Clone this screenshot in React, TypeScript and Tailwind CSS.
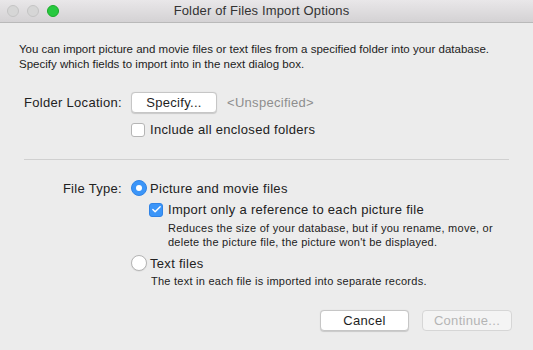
import { Check } from 'lucide-react';

function Light({ color }: { color: 'gray' | 'green' }) {
  return (
    <span
      className={`block w-[12px] h-[12px] rounded-full border ${
        color === 'green'
          ? 'bg-[#27c93f] border-[#1aab29]'
          : 'bg-[#d6d6d6] border-[#c4c4c4]'
      }`}
    />
  );
}

function Radio({ checked }: { checked?: boolean }) {
  return checked ? (
    <span className="flex items-center justify-center w-[16px] h-[16px] rounded-full bg-[#3b95f8] border border-[#2f83e6]">
      <span className="block w-[6px] h-[6px] rounded-full bg-white" />
    </span>
  ) : (
    <span className="block w-[16px] h-[16px] rounded-full bg-white border border-[#b5b5b5] shadow-[0_0.5px_1px_rgba(0,0,0,0.1)]" />
  );
}

function CheckBox({ checked }: { checked?: boolean }) {
  return checked ? (
    <span className="flex items-center justify-center w-[14px] h-[14px] rounded-[3px] bg-[#3b95f8] border border-[#2f83e6]">
      <Check className="w-[11px] h-[11px] text-white" strokeWidth={3} />
    </span>
  ) : (
    <span className="block w-[14px] h-[14px] rounded-[3px] bg-white border border-[#b5b5b5]" />
  );
}

function Button({
  children,
  disabled,
  className = '',
}: {
  children: React.ReactNode;
  disabled?: boolean;
  className?: string;
}) {
  return (
    <button
      type="button"
      className={`h-[21px] rounded-[4px] border text-[13px] tracking-[0.3px] leading-none ${
        disabled
          ? 'border-[#d6d6d6] text-[#b4b4b4] bg-[#f4f4f4]'
          : 'border-[#c6c6c6] text-[#1e1e1e] bg-white shadow-[0_0.5px_1px_rgba(0,0,0,0.15)]'
      } ${className}`}
    >
      {children}
    </button>
  );
}

export default function App() {
  return (
    <div
      className="w-[533px] h-[350px] bg-[#ececec] flex flex-col text-[#222]"
      style={{ fontFamily: '"Liberation Sans", Arial, sans-serif' }}
    >
      {/* title bar */}
      <div className="h-[23px] grid grid-cols-[1fr_auto_1fr] items-center bg-gradient-to-b from-[#e9e7e9] to-[#d4d2d4] border-b border-[#b9b9b9]">
        <div className="flex items-center gap-[8px] pl-[7px]">
          <Light color="gray" />
          <Light color="gray" />
          <Light color="green" />
        </div>
        <div className="text-[13px] tracking-[0.15px] text-[#333] -translate-x-[5px]">
          Folder of Files Import Options
        </div>
        <div />
      </div>

      <div className="flex flex-col pt-[19px] text-[13px] tracking-[0.3px]">
        <p className="pl-[19px] text-[11.5px] tracking-normal leading-[15px] text-[#1c1c1c]">
          You can import picture and movie files or text files from a specified folder into your database.
          <br />
          Specify which fields to import into in the next dialog box.
        </p>

        {/* folder location */}
        <div className="flex items-center mt-[20px]">
          <div className="w-[122px] text-right">Folder Location:</div>
          <Button className="ml-[9px] w-[86px]">Specify...</Button>
          <span className="ml-[10px] text-[#8e8e8e]">&lt;Unspecified&gt;</span>
        </div>
        <div className="flex items-center mt-[7px] ml-[131px] gap-[5px]">
          <CheckBox />
          <span>Include all enclosed folders</span>
        </div>

        <div className="mx-[24px] mt-[19px] h-px bg-[#d0d0d0]" />

        {/* file type */}
        <div className="flex items-center mt-[19px]">
          <div className="w-[122px] text-right">File Type:</div>
          <span className="ml-[9px]">
            <Radio checked />
          </span>
          <span className="ml-[3px]">Picture and movie files</span>
        </div>
        <div className="flex items-center mt-[2px] ml-[149px] gap-[5px]">
          <CheckBox checked />
          <span>Import only a reference to each picture file</span>
        </div>
        <p className="ml-[168px] mt-[1px] text-[11px] tracking-[0.25px] leading-[14px] text-[#222]">
          Reduces the size of your database, but if you rename, move, or
          <br />
          delete the picture file, the picture won't be displayed.
        </p>
        <div className="flex items-center mt-[5px] ml-[131px]">
          <Radio />
          <span className="ml-[3px]">Text files</span>
        </div>
        <p className="ml-[151px] mt-[1px] text-[11px] tracking-[0.25px] leading-[14px] text-[#222]">
          The text in each file is imported into separate records.
        </p>

        <div className="flex justify-end gap-[13px] pr-[21px] mt-[22px]">
          <Button className="w-[89px]">Cancel</Button>
          <Button disabled className="w-[90px]">
            Continue...
          </Button>
        </div>
      </div>
    </div>
  );
}
